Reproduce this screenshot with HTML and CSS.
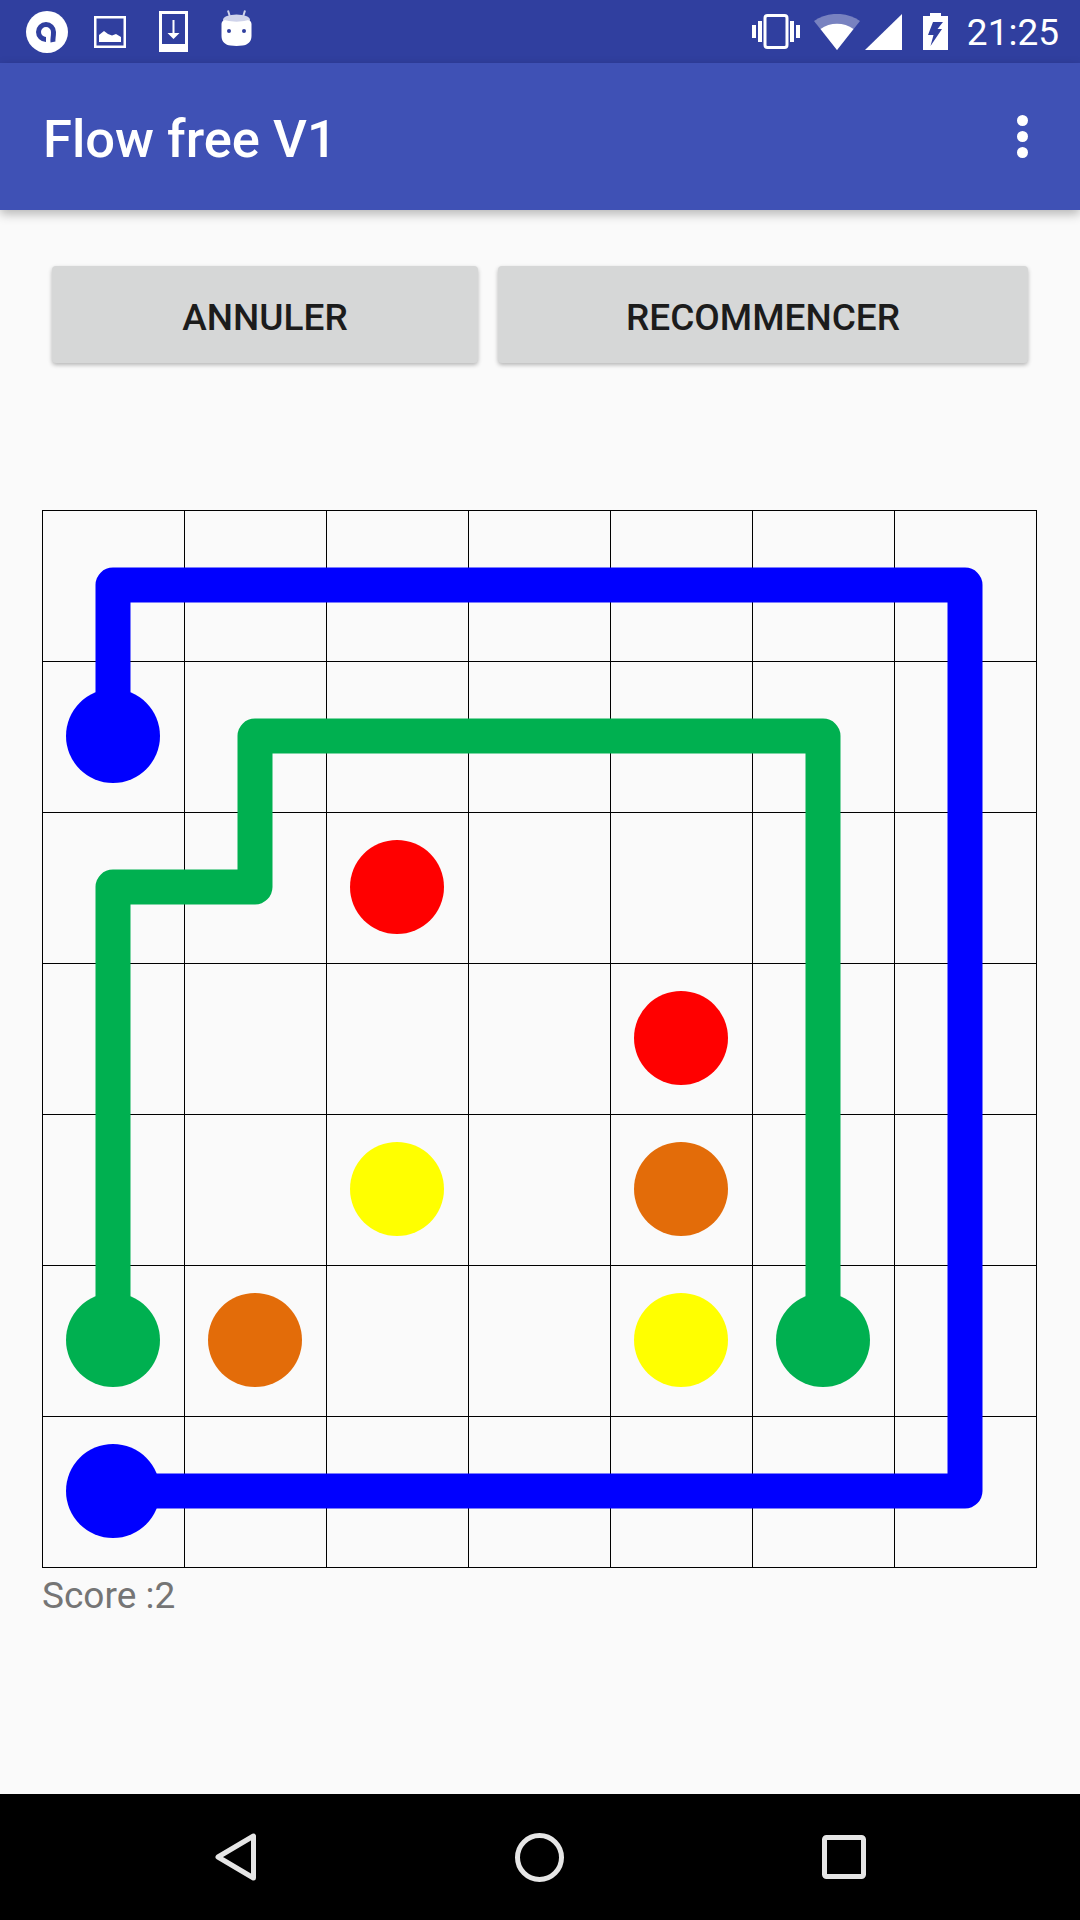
FILE: index.html
```html
<!DOCTYPE html>
<html>
<head>
<meta charset="utf-8">
<title>Flow free V1</title>
<link rel="stylesheet" href="styles.css">
</head>
<body>
<div class="screen">

<div class="statusbar">
  <div class="status-left">
    <svg class="ico-app" width="42" height="42" viewBox="0 0 42 42">
      <circle cx="21" cy="21" r="21" fill="#fff"/>
      <path d="M27 31 C26.500 28 27.500 27 27.500 21 A7.500 7.500 0 1 0 20 28.500" fill="none" stroke="#303f9f" stroke-width="5"/>
    </svg>
    <svg class="ico-pic" width="32" height="32" viewBox="0 0 32 32">
      <rect x="1.250" y="1.250" width="29.500" height="29.500" fill="none" stroke="#fff" stroke-width="2.500"/>
      <path d="M5 26 V19 L10 15 L14 18 L18 19.500 L22 18 L27 21 V26 Z" fill="#fff"/>
    </svg>
    <svg class="ico-dl" width="29" height="41" viewBox="0 0 29 41">
      <path fill-rule="evenodd" d="M0 0 H29 V41 H0 Z M3 3 V33 H26 V3 Z" fill="#fff"/>
      <path d="M13.500 9 H15.500 V22 H20.500 L14.500 28 L8.500 22 H13.500 Z" fill="#fff"/>
    </svg>
    <svg class="ico-bot" width="31" height="36" viewBox="0 0 31 36">
      <path d="M7 0.500 L9 7 M24 0.500 L22 7" stroke="#cfd3ea" stroke-width="2" fill="none"/>
      <ellipse cx="15.500" cy="10" rx="13.500" ry="5.500" fill="#cfd3ea"/>
      <path d="M0.500 14 C0.500 11 3 9.500 5.500 10.500 C11.500 12 19.500 12 25.500 10.500 C28 9.500 30.500 11 30.500 14 V26 C30.500 32 26.500 35 21.500 35.500 C17.500 36 13.500 36 9.500 35.500 C4.500 35 0.500 32 0.500 26 Z" fill="#fff"/>
      <circle cx="8" cy="21" r="2" fill="#303f9f"/>
      <circle cx="23" cy="21" r="2" fill="#303f9f"/>
    </svg>
  </div>
  <div class="status-right">
    <svg class="ico-vib" width="48" height="35" viewBox="0 0 48 35">
      <rect x="0" y="11" width="4" height="13" fill="#fff"/>
      <rect x="6" y="7" width="4" height="21" fill="#fff"/>
      <rect x="13" y="1.500" width="22" height="32" rx="2.500" fill="none" stroke="#fff" stroke-width="3"/>
      <rect x="38" y="7" width="4" height="21" fill="#fff"/>
      <rect x="44" y="11" width="4" height="13" fill="#fff"/>
    </svg>
    <svg class="ico-wifi" width="46" height="36" viewBox="0 0 46 36">
      <path d="M0 7 C13 -2.500 33 -2.500 46 7 L23 36 Z" fill="#fff" fill-opacity="0.35"/>
      <path d="M6.500 15 C16 8 30 8 39.500 15 L23 36 Z" fill="#fff"/>
    </svg>
    <svg class="ico-sig" width="37" height="36" viewBox="0 0 37 36">
      <path d="M37 0 V36 H0 Z" fill="#fff"/>
    </svg>
    <svg class="ico-bat" width="25" height="37" viewBox="0 0 25 37">
      <path fill-rule="evenodd" d="M7 0 H18 V3 H25 V37 H0 V3 H7 Z M10 9 L5 22 H10.500 L7.500 33 L19 16 H14.500 L20 9 Z" fill="#fff"/>
    </svg>
    <span class="clock">21:25</span>
  </div>
</div>

<div class="appbar">
  <span class="app-title">Flow free V1</span>
  <div class="overflow"><i></i><i></i><i></i></div>
</div>

<div class="actions">
  <div class="btn btn-cancel">ANNULER</div>
  <div class="btn btn-restart">RECOMMENCER</div>
</div>

<svg class="board" width="996" height="1058" viewBox="42 510 996 1058">
  <g stroke="#000" stroke-width="1">
    <path d="M42.500 510 V1568 M184.500 510 V1568 M326.500 510 V1568 M468.500 510 V1568 M610.500 510 V1568 M752.500 510 V1568 M894.500 510 V1568 M1036.500 510 V1568"/>
    <path d="M42 510.500 H1037 M42 661.500 H1037 M42 812.500 H1037 M42 963.500 H1037 M42 1114.500 H1037 M42 1265.500 H1037 M42 1416.500 H1037 M42 1567.500 H1037"/>
  </g>
  <g fill="none" stroke-width="35" stroke-linejoin="round" stroke-linecap="round">
    <path stroke="#0000ff" d="M113 736 V585 H965 V1491 H113"/>
    <path stroke="#00b050" d="M113 1340 V887 H255 V736 H823 V1340"/>
  </g>
  <circle cx="113" cy="736" r="47" fill="#0000ff"/>
  <circle cx="113" cy="1491" r="47" fill="#0000ff"/>
  <circle cx="113" cy="1340" r="47" fill="#00b050"/>
  <circle cx="823" cy="1340" r="47" fill="#00b050"/>
  <circle cx="397" cy="887" r="47" fill="#ff0000"/>
  <circle cx="681" cy="1038" r="47" fill="#ff0000"/>
  <circle cx="397" cy="1189" r="47" fill="#ffff00"/>
  <circle cx="681" cy="1340" r="47" fill="#ffff00"/>
  <circle cx="681" cy="1189" r="47" fill="#e36c09"/>
  <circle cx="255" cy="1340" r="47" fill="#e36c09"/>
</svg>

<div class="score">Score :2</div>

<div class="navbar">
  <svg width="42" height="48" viewBox="0 0 42 48">
    <path d="M38.500 3 V45 L3 24 Z" fill="none" stroke="#e6e6e6" stroke-width="5" stroke-linejoin="round"/>
  </svg>
  <svg width="49" height="49" viewBox="0 0 49 49">
    <circle cx="24.500" cy="24.500" r="22" fill="none" stroke="#e6e6e6" stroke-width="5"/>
  </svg>
  <svg width="44" height="44" viewBox="0 0 44 44">
    <rect x="2.500" y="2.500" width="39" height="39" rx="2" fill="none" stroke="#e6e6e6" stroke-width="5"/>
  </svg>
</div>

</div>
</body>
</html>
```

FILE: styles.css
```css
* {
  box-sizing: border-box;
}
html, body {
  margin: 0;
  padding: 0;
}
body {
  background: #fafafa;
  font-family: Roboto, "Liberation Sans", sans-serif;
}
.screen {
  width: 1080px;
  height: 1920px;
  display: flex;
  flex-direction: column;
  overflow: hidden;
}
.statusbar {
  height: 63px;
  flex: none;
  background: #303f9f;
  display: flex;
  justify-content: space-between;
  align-items: center;
  padding: 0 21px 0 26px;
}
.status-left,
.status-right {
  display: flex;
  align-items: center;
}
.status-left svg,
.status-right svg {
  display: block;
}
.ico-pic {
  margin-left: 26px;
}
.ico-dl {
  margin-left: 33px;
}
.ico-bot {
  margin-left: 33px;
  margin-bottom: 7px;
}
.ico-wifi {
  margin-left: 14px;
}
.ico-sig {
  margin-left: 5px;
}
.ico-bat {
  margin-left: 21px;
}
.clock {
  margin-left: 19px;
  padding-top: 2px;
  color: #fff;
  font-size: 37px;
  line-height: 42px;
}
.appbar {
  height: 147px;
  flex: none;
  background: #3f51b5;
  display: flex;
  justify-content: space-between;
  align-items: center;
  padding: 0 52px 0 43px;
  box-shadow: 0 4px 10px rgba(0, 0, 0, 0.28);
  position: relative;
}
.app-title {
  margin-top: 5px;
  color: #fff;
  font-size: 52.5px;
  font-weight: 500;
}
.overflow {
  display: flex;
  flex-direction: column;
  gap: 5px;
}
.overflow i {
  display: block;
  width: 11px;
  height: 11px;
  border-radius: 50%;
  background: #fff;
}
.actions {
  flex: none;
  display: flex;
  gap: 20px;
  padding: 56px 0 0 52px;
}
.btn {
  height: 97px;
  padding-top: 5px;
  background: #d6d7d7;
  border-radius: 4px;
  box-shadow: 0 2px 4px rgba(0, 0, 0, 0.28);
  color: #1c1c1c;
  font-size: 37px;
  font-weight: 500;
  display: flex;
  align-items: center;
  justify-content: center;
}
.btn-cancel {
  width: 426px;
}
.btn-restart {
  width: 530px;
}
.board {
  display: block;
  flex: none;
  margin: 147px 0 0 42px;
}
.score {
  flex: none;
  margin: 6px 0 0 42px;
  color: #757575;
  font-size: 37px;
  line-height: 44px;
}
.navbar {
  margin-top: auto;
  height: 126px;
  flex: none;
  background: #000;
  display: flex;
  align-items: center;
  justify-content: space-between;
  padding: 0 214px 0 215px;
}
```
